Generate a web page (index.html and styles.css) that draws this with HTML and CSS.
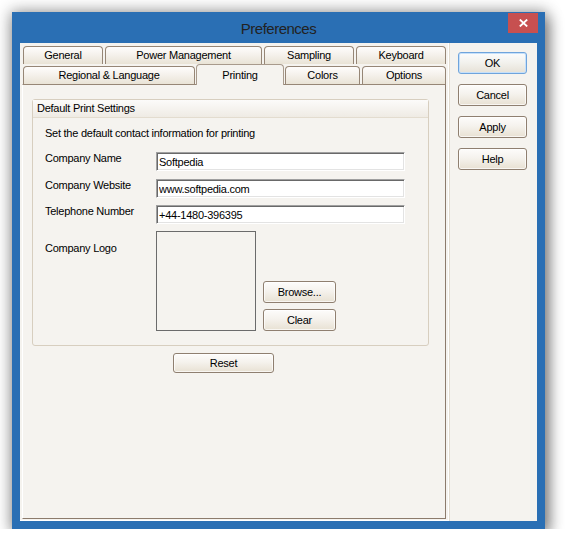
FILE: index.html
```html
<!DOCTYPE html>
<html lang="en">
<head>
    <meta charset="UTF-8">
    <title>Preferences</title>
    <link rel="stylesheet" href="styles.css">
</head>
<body>
    <div class="window">
        <div class="titlebar">
            <span class="title">Preferences</span>
            <div class="close">
                <svg width="9" height="8" viewBox="0 0 9 8">
                    <path d="M0.8 0.5 L8.2 7.5 M8.2 0.5 L0.8 7.5" stroke="#fff" stroke-width="1.8" fill="none"/>
                </svg>
            </div>
        </div>
        <div class="client">
            <div class="tabarea">
                <div class="tabrow back">
                    <div class="tab t-general">General</div>
                    <div class="tab t-power">Power Management</div>
                    <div class="tab t-sampling">Sampling</div>
                    <div class="tab t-keyboard">Keyboard</div>
                </div>
                <div class="tabrow front">
                    <div class="tab t-regional">Regional &amp; Language</div>
                    <div class="tab t-printing selected">Printing</div>
                    <div class="tab t-colors">Colors</div>
                    <div class="tab t-options">Options</div>
                </div>
                <div class="panel">
                    <div class="group">
                        <div class="group-head">Default Print Settings</div>
                        <div class="group-body">
                            <p class="intro">Set the default contact information for printing</p>
                            <div class="form">
                                <label class="lbl">Company Name</label>
                                <input class="field first" type="text" value="Softpedia">
                                <label class="lbl">Company Website</label>
                                <input class="field" type="text" value="www.softpedia.com">
                                <label class="lbl">Telephone Number</label>
                                <input class="field" type="text" value="+44-1480-396395">
                                <label class="lbl logo-lbl">Company Logo</label>
                                <div class="logo-row">
                                    <div class="logo-box"></div>
                                    <div class="logo-btns">
                                        <button class="btn small">Browse...</button>
                                        <button class="btn small">Clear</button>
                                    </div>
                                </div>
                            </div>
                        </div>
                    </div>
                    <button class="btn reset">Reset</button>
                </div>
            </div>
            <div class="side">
                <button class="btn side-btn default">OK</button>
                <button class="btn side-btn">Cancel</button>
                <button class="btn side-btn">Apply</button>
                <button class="btn side-btn">Help</button>
            </div>
        </div>
    </div>
</body>
</html>
```

FILE: styles.css
```css
* {
    padding: 0;
    margin: 0;
    box-sizing: border-box;
}

body {
    background: #fff;
    font-family: "Liberation Sans", Arial, sans-serif;
    font-size: 11px;
    letter-spacing: -0.25px;
    color: #000;
}

div.window {
    margin: 12px 0 0 12px;
    width: 533px;
    height: 517px;
    padding: 0 8px 8px;
    background: #2a6fb4;
    box-shadow: 0 0 14px 2px rgba(0, 0, 0, 0.3), 4px 6px 14px rgba(0, 0, 0, 0.4);
}

div.titlebar {
    display: flex;
    align-items: flex-start;
    height: 31px;
    margin: 0 -8px;
    padding: 0 7px 0 37px;
}

span.title {
    flex: 1;
    text-align: center;
    line-height: 31px;
    padding-top: 1px;
    font-size: 15px;
    letter-spacing: -0.5px;
    color: #222;
}

div.close {
    width: 30px;
    height: 20px;
    margin-top: 1px;
    background: #c75050;
    display: flex;
    align-items: center;
    justify-content: center;
}

div.close svg {
    display: block;
}

div.client {
    display: flex;
    height: 478px;
    background: #f5f3ef;
}

div.tabarea {
    width: 429px;
    height: 478px;
    padding: 3px 0 0 2px;
    border-right: 1px solid #fff;
    border-bottom: 1px solid #fff;
    box-shadow: 1px 0 0 #e2dbcf;
}

div.tabrow {
    display: flex;
    height: 18px;
    margin-left: 1px;
}

div.tabrow.front {
    margin-top: 2px;
    align-items: flex-end;
}

div.tab {
    height: 18px;
    border: 1px solid #968676;
    border-bottom: none;
    border-radius: 4px 4px 0 0;
    background: linear-gradient(#fefdfc, #f4f0ea 50%, #e9e3d6);
    text-align: center;
    line-height: 17px;
    white-space: nowrap;
}

div.tab.selected {
    height: 21px;
    padding-top: 2px;
    position: relative;
    top: 1px;
    z-index: 1;
    background: #f5f3ef;
    border-color: #a89a8c;
}

div.tab.t-general { width: 80px; margin-right: 2px; }
div.tab.t-power { width: 157px; margin-right: 2px; }
div.tab.t-sampling { width: 90px; margin-right: 2px; }
div.tab.t-keyboard { width: 90px; }

div.tab.t-regional { width: 172px; margin-right: 1px; }
div.tab.t-printing { width: 88px; margin-right: 1px; }
div.tab.t-colors { width: 75px; margin-right: 2px; }
div.tab.t-options { width: 84px; }

div.panel {
    width: 424px;
    height: 435px;
    padding: 14px 0 0 9px;
    border: 1px solid;
    border-color: #968676 #8c7b6c #8c7b6c #fff;
    background: #f5f3ef;
}

div.group {
    width: 397px;
    height: 247px;
    border: 1px solid #d7cebf;
    border-radius: 3px;
}

div.group-head {
    height: 18px;
    padding-left: 4px;
    line-height: 17px;
    border-bottom: 1px solid #e3dccf;
    background: linear-gradient(#fcfbfa, #efebe4);
}

div.group-body {
    padding: 9px 0 0 12px;
}

p.intro {
    line-height: 13px;
}

div.form {
    margin-top: 12px;
    display: grid;
    grid-template-columns: 111px auto;
    row-gap: 7px;
    align-items: start;
}

label.lbl {
    line-height: 13px;
}

label.logo-lbl {
    margin-top: 11px;
}

input.field {
    display: block;
    width: 249px;
    height: 19px;
    padding: 0 2px;
    font: inherit;
    letter-spacing: inherit;
    color: #000;
    background: #fff;
    border: 1px solid;
    border-color: #a0a0a0 #fff #fff #a0a0a0;
    box-shadow: inset 1px 1px 0 #696969, inset -1px -1px 0 #e3e3e3;
    outline: none;
}

input.field.first {
    margin-bottom: 1px;
}

div.logo-row {
    display: flex;
    align-items: flex-end;
    gap: 7px;
}

div.logo-box {
    width: 100px;
    height: 100px;
    border: 1px solid #6b6b6b;
}

div.logo-btns {
    display: flex;
    flex-direction: column;
    gap: 6px;
}

button.btn {
    display: block;
    font: inherit;
    letter-spacing: inherit;
    color: #000;
    border: 1px solid #8f7f70;
    border-radius: 3px;
    background: linear-gradient(#fdfcfb, #f5f2ed 45%, #e8e1d3);
    box-shadow: inset 0 0 0 1px rgba(255, 255, 255, 0.7);
    text-align: center;
}

button.small {
    width: 73px;
    height: 22px;
}

button.reset {
    width: 101px;
    height: 20px;
    margin: 7px 0 0 141px;
}

div.side {
    display: flex;
    flex-direction: column;
    gap: 10px;
    padding: 9px 0 0 9px;
}

button.side-btn {
    width: 69px;
    height: 22px;
}

button.default {
    border-color: #6fa4dc;
    box-shadow: inset 0 0 0 1px #c6e0fa;
    background: linear-gradient(#fbfcfd, #f3f2ee 45%, #e6e1d6);
}
```
